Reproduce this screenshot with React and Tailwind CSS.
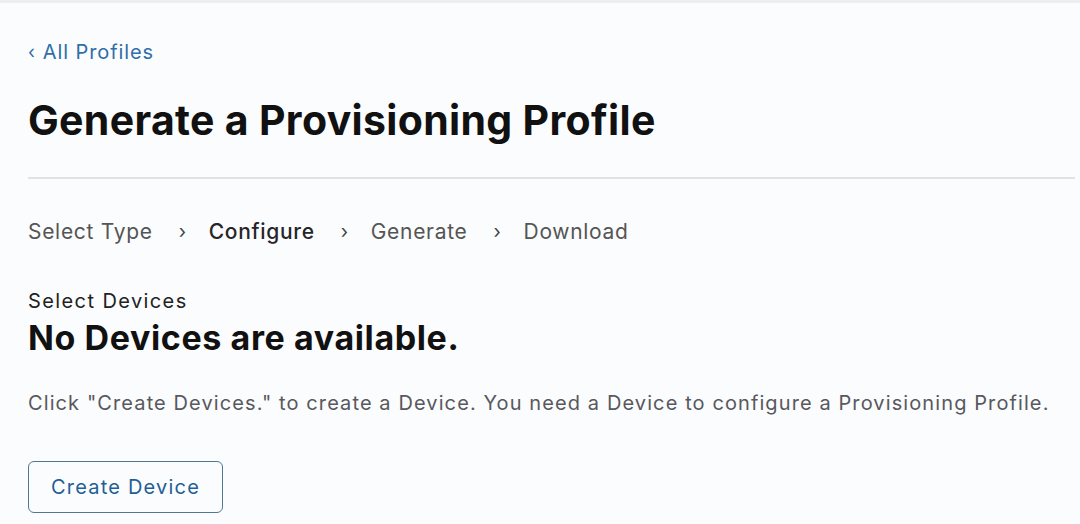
export default function App() {
  const steps = [
    { label: 'Select Type', active: false },
    { label: 'Configure', active: true },
    { label: 'Generate', active: false },
    { label: 'Download', active: false },
  ];

  return (
    <div
      className="w-[1080px] h-[524px] overflow-hidden bg-[#fbfcfd] border-t-[3px] border-[#eceef0]"
      style={{ fontFamily: 'Inter, "Noto Sans", sans-serif' }}
    >
      <div className="pl-[28px] pr-[5px]">
        <a className="flex items-center gap-[7px] pt-[36px] text-[20px] leading-[26px] tracking-[0.9px] text-[#2f6ea8]">
          <span className="text-[18px]">‹</span>
          <span>All Profiles</span>
        </a>
        <h1 className="mt-[31px] text-[41px] leading-[48px] font-bold text-[#111] tracking-[0.33px]">
          Generate a Provisioning Profile
        </h1>
        <div className="mt-[33px] h-[2px] bg-[#e0e2e5]" />

        {/* steps */}
        <div className="flex items-center mt-[39px] text-[21px] leading-[28px] tracking-[0.7px]">
          {steps.map((s, i) => (
            <div key={s.label} className="flex items-center">
              {i > 0 && <span className="ml-[26px] mr-[22px] text-[#444] text-[19px]">›</span>}
              <span className={s.active ? 'text-[#262629] font-medium' : 'text-[#555]'}>{s.label}</span>
            </div>
          ))}
        </div>

        <div className="mt-[43px] text-[20px] leading-[24px] tracking-[1.4px] text-[#222]">Select Devices</div>
        <h2 className="mt-[3px] text-[34px] leading-[44px] font-bold text-[#111] tracking-[0.6px]">
          No Devices are available.
        </h2>

        <p className="mt-[30px] text-[20px] leading-[26px] text-[#58585d] tracking-[1.1px]">
          Click "Create Devices." to create a Device. You need a Device to configure a Provisioning Profile.
        </p>

        <button className="mt-[45px] h-[52px] w-[195px] rounded-[6px] border-[1.5px] border-[#4f7894] text-[20px] tracking-[1.2px] text-[#1f5f96]">
          Create Device
        </button>
      </div>
    </div>
  );
}
